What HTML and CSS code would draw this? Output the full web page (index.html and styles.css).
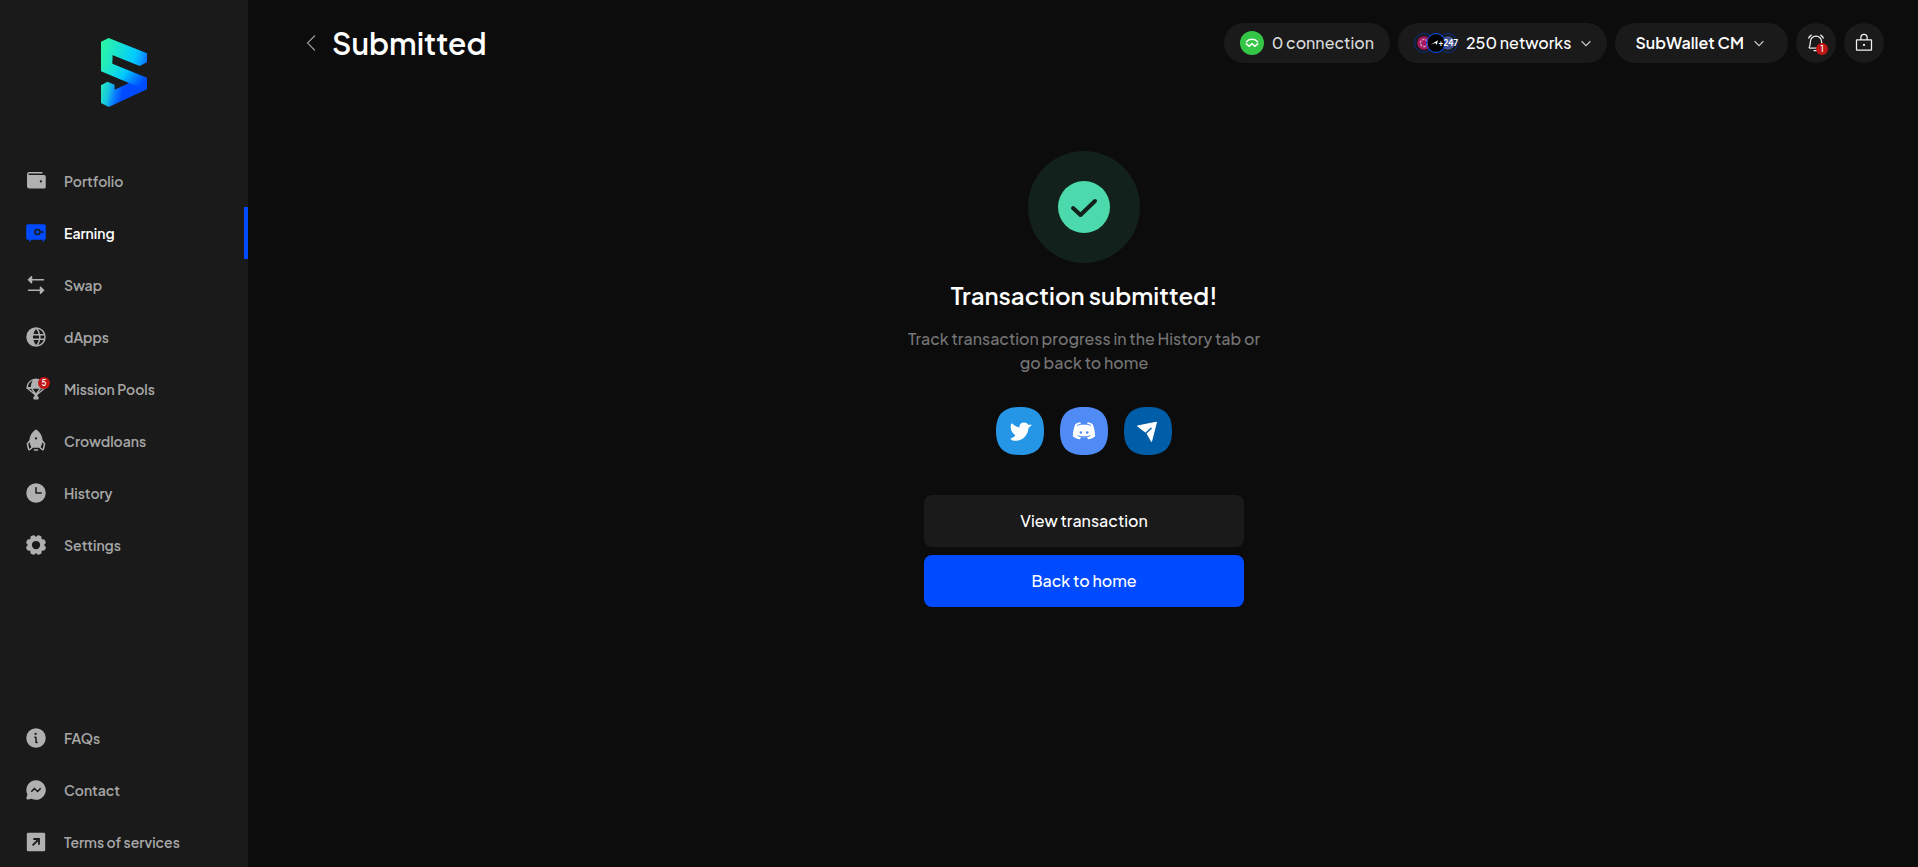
FILE: index.html
```html
<!DOCTYPE html>
<html lang="en">
<head>
<meta charset="utf-8">
<title>Submitted</title>
<meta name="viewport" content="width=device-width, initial-scale=1">
<link rel="stylesheet" href="styles.css">
</head>
<body>
<div class="app">
  <aside class="sidebar">
    <a class="logo" href="#" aria-label="SubWallet">
      <svg viewBox="303 114 138 207" width="46" height="69">
        <defs>
          <linearGradient id="top" gradientUnits="userSpaceOnUse" x1="303" y1="150" x2="441" y2="190">
            <stop offset="0" stop-color="#2af5a8"/><stop offset=".35" stop-color="#18e2d0"/><stop offset=".7" stop-color="#00ccff"/><stop offset=".85" stop-color="#0aa4ff"/><stop offset="1" stop-color="#0b66ff"/>
          </linearGradient>
          <linearGradient id="mid" gradientUnits="userSpaceOnUse" x1="303" y1="190" x2="415" y2="270">
            <stop offset="0" stop-color="#2af0ae"/><stop offset=".3" stop-color="#16e0d8"/><stop offset=".55" stop-color="#00c8ff"/><stop offset=".78" stop-color="#0080ff"/><stop offset="1" stop-color="#004bff"/>
          </linearGradient>
          <linearGradient id="low" gradientUnits="userSpaceOnUse" x1="303" y1="275" x2="365" y2="290">
            <stop offset="0" stop-color="#22e5c4"/><stop offset=".35" stop-color="#18c4e0"/><stop offset=".65" stop-color="#0a80ff"/><stop offset="1" stop-color="#004bff"/>
          </linearGradient>
        </defs>
        <path fill="url(#low)" d="M303 256 322 245 344 254V269L387 249 441 233V268L326 321 303 309Z"/>
        <path fill="url(#mid)" d="M303 165H337V191L441 233 441 268 387 249 303 214Z"/>
        <path fill="url(#top)" d="M303 125 326 114 441 160V187L419 198 337 165V180L303 180Z"/>
      </svg>
    </a>
    <nav class="menu" aria-label="Main">
      <a class="item" href="#">
        <span class="icon"><svg viewBox="0 0 256 256"><path d="M216 64H56a8 8 0 0 1 0-16h136a8 8 0 0 0 0-16H56a24 24 0 0 0-24 24v128a24 24 0 0 0 24 24h160a16 16 0 0 0 16-16V80a16 16 0 0 0-16-16Zm-36 80a12 12 0 1 1 12-12 12 12 0 0 1-12 12Z"/></svg></span>Portfolio
      </a>
      <a class="item active" href="#" aria-current="page">
        <span class="icon"><svg viewBox="0 0 256 256"><path d="M40 34H216a16 16 0 0 1 16 16V184a16 16 0 0 1-16 16V214a8 8 0 0 1-16 0V200H72V214a8 8 0 0 1-16 0V200H40a16 16 0 0 1-16-16V50A16 16 0 0 1 40 34Z"/><path class="cut" stroke-width="17" d="M170 117H208M170 117a27 27 0 1 1-54 0 27 27 0 0 1 54 0Z"/></svg></span>Earning
      </a>
      <a class="item" href="#">
        <span class="icon"><svg viewBox="0 0 256 256"><path d="M42 66 74 34a8 8 0 0 1 14 6V64H208a8 8 0 0 1 0 16H88v24a8 8 0 0 1-14 6L42 78a8 8 0 0 1 0-12ZM214 178l-32-32a8 8 0 0 0-14 6v24H48a8 8 0 0 0 0 16H168v24a8 8 0 0 0 14 6l32-32a8 8 0 0 0 0-12Z"/></svg></span>Swap
      </a>
      <a class="item" href="#">
        <span class="icon"><svg viewBox="0 0 256 256"><path fill-rule="evenodd" d="M128 24a104 104 0 1 0 0 208 104 104 0 0 0 0-208Zm88 104c0 5-.5 11-1.500 16h-39a157 157 0 0 0 0-32h39c1 5 1.500 11 1.500 16ZM160 144H96.500a142 142 0 0 1 0-32h63a142 142 0 0 1 .5 32Zm-4.500 16c-5 20-14 39-27.500 54-13-15-22-34-27-54ZM101 96c5-20 14-39 27-54 13 15 22 34 27.500 54Zm71 0a130 130 0 0 0-22-53 88 88 0 0 1 60 53Zm-22 117a130 130 0 0 0 22-53h38a88 88 0 0 1-60 53Z"/></svg></span>dApps
      </a>
      <a class="item" href="#">
        <span class="icon"><svg viewBox="0 0 256 256"><path fill-rule="evenodd" d="M128 16a104 104 0 0 0-104 100 9 9 0 0 0 4 7l84 68v17h-4a8 8 0 0 0-8 8v16a8 8 0 0 0 8 8h40a8 8 0 0 0 8-8v-16a8 8 0 0 0-8-8h-4v-17l84-68a9 9 0 0 0 4-7A104 104 0 0 0 128 16ZM41 107a88 88 0 0 1 53-69c-12 17-20 40-21 69ZM215 107a88 88 0 0 0-53-69c12 17 20 40 21 69ZM54 124h21l28 40ZM93 124h70l-35 50ZM153 164l28-40h21Z"/></svg><span class="badge">5</span></span>Mission Pools
      </a>
      <a class="item" href="#">
        <span class="icon"><svg viewBox="0 0 256 256"><path d="M152 224a8 8 0 0 1-8 8h-32a8 8 0 0 1 0-16h32a8 8 0 0 1 8 8Z"/><path fill-rule="evenodd" d="m224 148-26-32C193 60 161 26 138 10a16 16 0 0 0-20 0C95 26 63 60 58 116l-26 32a16 16 0 0 0-3 14l12 55a16 16 0 0 0 26 8l29-25h64l29 25a16 16 0 0 0 26-8l12-55a16 16 0 0 0-3-14ZM57 213l-12-55 15-18c2 17 8 34 19 53Zm71-101a12 12 0 1 1 0-24 12 12 0 0 1 0 24Zm71 101-22-20c11-19 17-36 19-53l15 18Z"/></svg></span>Crowdloans
      </a>
      <a class="item" href="#">
        <span class="icon"><svg viewBox="0 0 256 256"><path d="M128 24a104 104 0 1 0 0 208 104 104 0 0 0 0-208Zm56 112h-56a8 8 0 0 1-8-8V72a8 8 0 0 1 16 0v48h48a8 8 0 0 1 0 16Z"/></svg></span>History
      </a>
      <a class="item" href="#">
        <span class="icon"><svg viewBox="0 0 256 256"><path fill-rule="evenodd" d="M216 130v-4l15-19a8 8 0 0 0 1-7 107 107 0 0 0-11-26 8 8 0 0 0-6-4l-24-3-3-3-3-24a8 8 0 0 0-4-6 107 107 0 0 0-26-11 8 8 0 0 0-7 1l-18 15h-4L107 24a8 8 0 0 0-7-1 107 107 0 0 0-26 11 8 8 0 0 0-4 6l-3 24-3 3-24 3a8 8 0 0 0-6 4 107 107 0 0 0-11 26 8 8 0 0 0 1 7l15 19v4l-15 19a8 8 0 0 0-1 7 107 107 0 0 0 11 26 8 8 0 0 0 6 4l24 3 3 3 3 24a8 8 0 0 0 4 6 107 107 0 0 0 26 11 8 8 0 0 0 7-1l19-15h4l19 15a8 8 0 0 0 7 1 107 107 0 0 0 26-11 8 8 0 0 0 4-6l3-24 3-3 24-3a8 8 0 0 0 6-4 107 107 0 0 0 11-26 8 8 0 0 0-1-7ZM128 172a44 44 0 1 1 0-88 44 44 0 0 1 0 88Z"/></svg></span>Settings
      </a>
    </nav>
    <nav class="menu menu-bottom" aria-label="Support">
      <a class="item" href="#">
        <span class="icon"><svg viewBox="0 0 256 256"><path d="M128 24a104 104 0 1 0 0 208 104 104 0 0 0 0-208Zm-4 48a12 12 0 1 1 0 24 12 12 0 0 1 0-24Zm16 112h-8a12 12 0 0 1-12-12v-44h-4a8 8 0 0 1 0-16h8a12 12 0 0 1 12 12v44h4a8 8 0 0 1 0 16Z"/></svg></span>FAQs
      </a>
      <a class="item" href="#">
        <span class="icon"><svg viewBox="0 0 256 256"><path d="M128 24A104 104 0 0 0 36 176l-10 35a16 16 0 0 0 19 19l35-10A104 104 0 1 0 128 24Z"/><path class="cut" stroke-width="17" d="m78 146 33-34 34 32 33-34"/></svg></span>Contact
      </a>
      <a class="item" href="#">
        <span class="icon"><svg viewBox="0 0 256 256"><rect x="30" y="30" width="196" height="196" rx="14"/><path class="cut" stroke-width="19" d="m92 164 68-68M100 96h60v60"/></svg></span>Terms of services
      </a>
    </nav>
  </aside>

  <main class="main">
    <header class="header">
      <button class="back" type="button" aria-label="Back"><svg width="24" height="24" viewBox="0 0 256 256"><path d="m160 208-80-80 80-80"/></svg></button>
      <h1 class="title">Submitted</h1>
      <div class="tools">
        <button class="pill connection" type="button">
          <span class="status"><svg width="24" height="24" viewBox="0 0 24 24"><path d="M6.500 10.800C9 7.500 15 7.500 17.500 10.800M6.300 12.800 9.300 15.300 12 12.600 14.700 15.300 17.700 12.800"/></svg></span>
          <span>0 connection</span>
        </button>
        <button class="pill networks" type="button">
          <span class="stack">
            <span class="coin dim"><svg viewBox="0 0 20 20"><circle cx="10" cy="10" r="7.500" fill="#a81560"/><circle cx="10" cy="10" r="4" fill="none" stroke="#c9a0b5" stroke-width="1.500" stroke-dasharray="3 1"/></svg></span>
            <span class="coin"><svg viewBox="0 0 20 20"><circle cx="10" cy="10" r="9.500" fill="#000"/><path fill="#fff" d="m4 12 8-5-1 5-2-2Z"/></svg></span>
            <span class="coin dim"><svg viewBox="0 0 20 20"><circle cx="10" cy="10" r="7.500" fill="#44558f"/></svg></span>
            <span class="more">+247</span>
          </span>
          <span>250 networks</span>
          <svg class="caret" width="14" height="14" viewBox="0 0 256 256"><path d="m48 96 80 80 80-80"/></svg>
        </button>
        <button class="pill account" type="button">
          <span>SubWallet CM</span>
          <svg class="caret" width="14" height="14" viewBox="0 0 256 256"><path d="m48 96 80 80 80-80"/></svg>
        </button>
        <button class="pill round" type="button" aria-label="Notifications">
          <svg class="line" width="20" height="20" viewBox="0 0 256 256"><path d="M56 112a72 72 0 0 1 144 0c0 36 8 57 14 68a8 8 0 0 1-7 12H49a8 8 0 0 1-7-12c6-11 14-32 14-68ZM96 224h64M225 71a104 104 0 0 0-40-47M31 71a104 104 0 0 1 40-47"/></svg>
          <span class="badge">1</span>
        </button>
        <button class="pill round" type="button" aria-label="Lock">
          <svg class="line" width="20" height="20" viewBox="0 0 256 256"><rect x="32" y="88" width="192" height="132" rx="6"/><path d="M88 88V56a40 40 0 0 1 80 0v32"/><circle cx="128" cy="152" r="6"/></svg>
        </button>
      </div>
    </header>

    <section class="result">
      <div class="halo"><svg width="52" height="52" viewBox="0 0 52 52"><circle cx="26" cy="26" r="26" fill="#4cdaac"/><path d="m15 27 7.500 7L37 20"/></svg></div>
      <h2 class="heading">Transaction submitted!</h2>
      <p class="note">Track transaction progress in the History tab or go back to home</p>
      <div class="socials">
        <a href="#" aria-label="Twitter"><svg width="48" height="48" viewBox="0 0 48 48"><path fill="#2595e6" d="M24 0C40.500 0 48 7.500 48 24S40.500 48 24 48 0 40.500 0 24 7.500 0 24 0Z"/><path fill="#fff" d="m35.500 18.300-3 2.700c-.6 7.500-6 12.700-12.500 12.700-2.500 0-4.500-.5-5.200-1.500-.2-.5 0-.8.400-1 .2 0 2.600-1 4.200-2.800C15.300 25.500 14 21.500 15 17c.1-.6.900-.8 1.400-.3 2 2 4.500 3.300 7.100 3.700C23 17.500 25.200 15.500 28 15.500c1.800 0 3.300.9 4.200 2.300h2.900c.6-.2.900.2.400.5Z"/></svg></a>
        <a href="#" aria-label="Discord"><svg width="48" height="48" viewBox="0 0 48 48"><path fill="#4f8af5" d="M24 0C40.500 0 48 7.500 48 24S40.500 48 24 48 0 40.500 0 24 7.500 0 24 0Z"/><path fill="#fff" fill-rule="evenodd" d="M20.500 15.200 20.800 17.200C23 16.900 25 16.900 27.200 17.200L27.500 15.200C29.800 15.500 31.400 16.200 32.700 17.200 34 20 34.900 24 35.200 28.500c0 .5-.2 1-.6 1.300-1.400 1-3.500 2-5.500 2.500-.6.100-1-.1-1.300-.6l-.8-1.700c-2 .3-4 .3-6 0l-.8 1.700c-.3.500-.7.700-1.300.6-2-.5-4.100-1.500-5.500-2.500-.4-.3-.6-.8-.6-1.300.3-4.500 1.200-8.500 2.500-11.300 1.300-1 2.900-1.700 5.200-2Zm.3 9a1.300 1.300 0 1 0 .1 2.600 1.300 1.300 0 0 0 0-2.600Zm6.400 0a1.300 1.300 0 1 0 .1 2.600 1.300 1.300 0 0 0 0-2.600Z"/><path fill="none" stroke="#4f8af5" d="M17 18.500c2.500-1 3.500-1.300 7-1.300s4.500.3 7 1.300M17.500 28.500c1.500.8 3.500 1.300 6.500 1.300s5-.5 6.500-1.300"/></svg></a>
        <a href="#" aria-label="Telegram"><svg width="48" height="48" viewBox="0 0 48 48"><path fill="#005ea8" d="M24 0C40.500 0 48 7.500 48 24S40.500 48 24 48 0 40.500 0 24 7.500 0 24 0Z"/><path fill="#fff" stroke="#fff" stroke-linejoin="round" d="M32.500 15.200 13.500 19 20.500 24.500 23 26.500 27.500 34.500Z"/><path fill="none" stroke="#005ea8" stroke-width="1.500" d="m27.500 21-6.500 6"/></svg></a>
      </div>
      <div class="actions">
        <button class="btn" type="button">View transaction</button>
        <button class="btn primary" type="button">Back to home</button>
      </div>
    </section>
  </main>
</div>
</body>
</html>
```
FILE: styles.css
```css
* {
  box-sizing: border-box;
}

body {
  margin: 0;
  background: #0c0c0c;
  color: #fff;
  font-family: "Plus Jakarta Sans", Inter, "Liberation Sans", sans-serif;
  font-size: 16px;
  font-weight: 500;
  line-height: 24px;
}

button {
  font: inherit;
  color: inherit;
  border: 0;
  padding: 0;
  background: none;
  cursor: pointer;
}

a {
  color: inherit;
  text-decoration: none;
}

svg {
  display: block;
}

.app {
  display: flex;
  height: 100vh;
  overflow: hidden;
}

.sidebar {
  flex: none;
  width: 248px;
  display: flex;
  flex-direction: column;
  background: #1a1a1a;
}

.logo {
  align-self: center;
  padding: 38px 0 48px;
}

.menu-bottom {
  margin-top: auto;
  margin-bottom: -1px;
}

.item {
  display: flex;
  align-items: center;
  gap: 16px;
  height: 52px;
  padding-left: 24px;
  font-size: 14px;
  font-weight: 600;
  color: #a6a6a6;
  border-right: 4px solid transparent;
}

.icon {
  position: relative;
  width: 24px;
  height: 24px;
  fill: #b0b0b0;
}

.cut {
  fill: none;
  stroke: #1a1a1a;
}

.item.active {
  color: #fff;
  border-color: #004bff;
}

.active .icon {
  fill: #004bff;
}

.badge {
  position: absolute;
  top: 0;
  right: -2px;
  width: 12px;
  height: 12px;
  border-radius: 50%;
  background: #bf1616;
  color: #fff;
  font-size: 8px;
  font-weight: 600;
  line-height: 12px;
  text-align: center;
}

.main {
  flex: 1;
  min-width: 0;
  padding: 23px 34px 0 36px;
}

.header {
  display: flex;
  align-items: center;
  height: 40px;
}

.back {
  margin: 0 8px 0 16px;
}

.back path {
  fill: none;
  stroke: #999;
  stroke-width: 12;
}

.title {
  margin: 0;
  font-size: 30px;
  font-weight: 600;
  line-height: 40px;
}

.tools {
  display: flex;
  gap: 8px;
  margin-left: auto;
}

.pill {
  display: flex;
  align-items: center;
  height: 40px;
  border-radius: 20px;
  background: #1a1a1a;
}

.connection {
  gap: 8px;
  padding: 0 16px;
  color: #d9d9d9;
}

.status {
  width: 24px;
  height: 24px;
  border-radius: 50%;
  background: #35c648;
}

.status path {
  fill: none;
  stroke: #fff;
  stroke-width: 1.5;
  stroke-linecap: round;
  stroke-linejoin: round;
}

.networks {
  gap: 8px;
  padding: 0 14px 0 16px;
}

.stack {
  position: relative;
  display: flex;
}

.coin {
  position: relative;
  width: 20px;
  height: 20px;
  border: 1px solid #004bff;
  border-radius: 50%;
}

.coin:nth-child(2) {
  z-index: 1;
}

.coin + .coin {
  margin-left: -8px;
}

.coin.dim {
  border-color: #0a2f8a;
}

.more {
  position: absolute;
  right: 0;
  top: 4px;
  z-index: 2;
  font-size: 8px;
  font-weight: 700;
  line-height: 12px;
}

.caret path {
  fill: none;
  stroke: #ccc;
  stroke-width: 20;
}

.account {
  gap: 8px;
  padding: 0 22px 0 20px;
  font-weight: 600;
}

.round {
  position: relative;
  width: 40px;
  justify-content: center;
}

.round .badge {
  top: 20px;
  right: 8px;
}

.line {
  fill: none;
  stroke: #f2f2f2;
  stroke-width: 16;
}

.result {
  display: flex;
  flex-direction: column;
  align-items: center;
  padding-top: 88px;
  text-align: center;
}

.halo {
  display: grid;
  place-items: center;
  width: 112px;
  height: 112px;
  border-radius: 50%;
  background: #13211c;
}

.halo path {
  fill: none;
  stroke: #13211c;
  stroke-width: 4;
  stroke-linecap: round;
  stroke-linejoin: round;
}

.heading {
  margin: 16px 0;
  font-size: 24px;
  font-weight: 600;
  line-height: 32px;
}

.note {
  width: 100%;
  max-width: 360px;
  margin: 0;
  color: #757575;
}

.socials {
  display: flex;
  gap: 16px;
  padding: 32px 0 40px;
}

.actions {
  display: flex;
  flex-direction: column;
  gap: 8px;
  width: 100%;
  max-width: 320px;
}

.btn {
  height: 52px;
  border-radius: 8px;
  background: #1a1a1a;
}

.btn.primary {
  background: #004bff;
}
```
